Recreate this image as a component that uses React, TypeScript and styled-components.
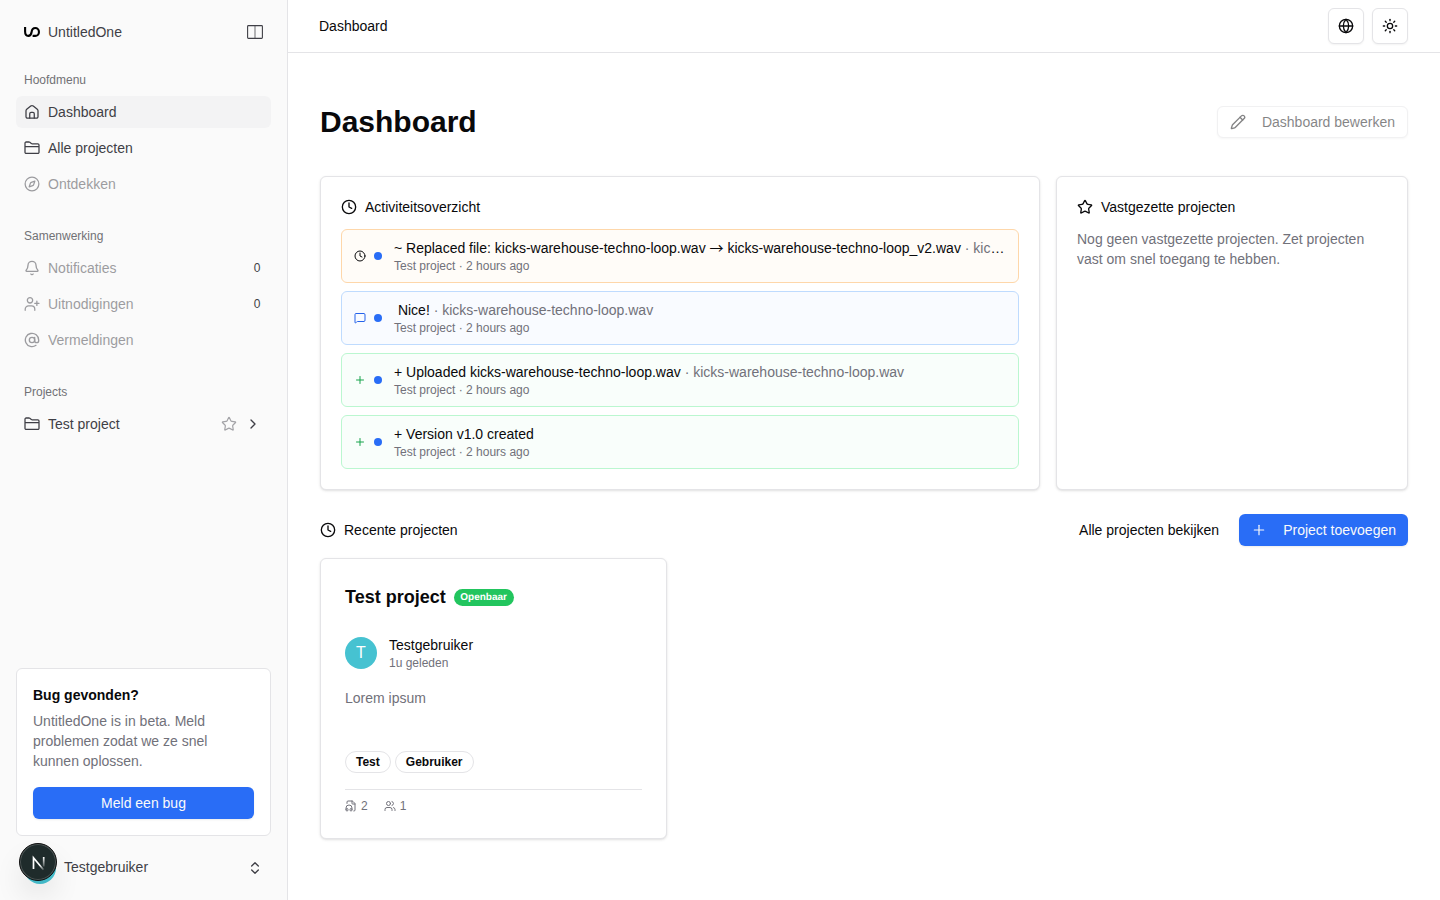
import React from 'react';
import styled, { createGlobalStyle, css } from 'styled-components';
import {
  AtSign,
  Bell,
  ChevronRight,
  ChevronsUpDown,
  Clock,
  FileHeadphone,
  Globe,
  MessageSquare,
  Pencil,
  Plus,
  Star,
  Sun,
  Users,
} from 'lucide-react';

const GlobalStyle = createGlobalStyle`
  *, *::before, *::after { box-sizing: border-box; }
  body {
    margin: 0;
    background: #fff;
    color: #09090b;
    font: 400 14px/20px "Liberation Sans", Arial, sans-serif;
  }
  h1, h2, h3, p { margin: 0; font-size: inherit; font-weight: inherit; }
  button { font: inherit; color: inherit; margin: 0; }
  svg { display: block; flex: none; }
`;

const Shell = styled.div`
  display: flex;
  height: 900px;
  overflow: hidden;
`;

const Sidebar = styled.aside`
  display: flex;
  flex-direction: column;
  flex: none;
  width: 288px;
  padding: 16px;
  background: #fafafa;
  border-right: 1px solid #e4e4e7;
  color: #3f3f46;
`;

const Brand = styled.div`
  display: flex;
  align-items: center;
  gap: 8px;
  height: 32px;
  padding: 0 8px;
  margin-bottom: 16px;

  span { flex: 1; }
`;

const NavGroup = styled.nav`
  display: flex;
  flex-direction: column;
  gap: 4px;
  margin-bottom: 20px;
`;

const NavLabel = styled.div`
  height: 28px;
  padding: 0 8px;
  font-size: 12px;
  line-height: 32px;
  color: #717175;
`;

const NavItem = styled.a<{ $active?: boolean; $muted?: boolean }>`
  display: flex;
  align-items: center;
  gap: 8px;
  height: 32px;
  padding: 0 10px 0 8px;
  border-radius: 6px;
  background: ${(p) => (p.$active ? '#f3f3f4' : 'transparent')};

  > svg, > span { opacity: ${(p) => (p.$muted ? 0.5 : 1)}; }
  > span { flex: 1; }
`;

const Count = styled.b`
  margin-right: 0.6px;
  font-size: 12px;
  font-weight: 400;
`;

const ItemActions = styled.div`
  display: flex;
  align-items: center;
  gap: 8px;

  svg:first-child { color: #a3a3a7; }
`;

const BugCard = styled.section`
  margin-top: auto;
  padding: 16px;
  background: #fff;
  border: 1px solid #e4e4e7;
  border-radius: 6px;
  color: #71717a;

  h2 {
    margin-bottom: 6px;
    font-weight: 700;
    color: #09090b;
  }
`;

const Button = styled.button<{ $variant: 'primary' | 'outline' | 'ghost'; $wide?: boolean }>`
  display: inline-flex;
  align-items: center;
  justify-content: center;
  gap: 16px;
  height: 32px;
  padding: 0 12px;
  border: 0;
  border-radius: 6px;
  background: transparent;
  white-space: nowrap;
  ${(p) => p.$wide && css`width: 100%; margin-top: 16px;`}
  ${(p) =>
    p.$variant === 'primary' &&
    css`
      background: #296df6;
      color: #fafafa;
      box-shadow: 0 1px 2px rgba(0, 0, 0, 0.08);
    `}
  ${(p) =>
    p.$variant === 'outline' &&
    css`
      background: #fff;
      border: 1px solid #e4e4e7;
      box-shadow: 0 1px 2px rgba(0, 0, 0, 0.06);
      opacity: 0.5;
    `}
`;

const UserRow = styled.div`
  display: flex;
  align-items: center;
  gap: 8px;
  height: 32px;
  margin-top: 16px;
  padding: 0 8px;
  position: relative;

  > span { flex: 1; padding-bottom: 2px; }
`;

const Avatar = styled.div`
  flex: none;
  width: 32px;
  height: 32px;
  border-radius: 50%;
  background: #46c2d1;
  color: #fff;
  font-size: 16px;
  line-height: 31px;
  text-align: center;
`;

const DevBadge = styled.div`
  position: absolute;
  left: 3px;
  top: -9px;
  display: grid;
  place-items: center;
  width: 38px;
  height: 38px;
  border-radius: 50%;
  background: #1f2b2b;
  border: 1px solid #111;
  box-shadow: inset 0 0 0 1px rgba(255, 255, 255, 0.2), 0 16px 32px -8px rgba(0, 0, 0, 0.24);
`;

const Main = styled.main`
  flex: 1;
  min-width: 0;
`;

const TopBar = styled.header`
  display: flex;
  align-items: center;
  justify-content: space-between;
  height: 53px;
  padding: 0 32px 0 31px;
  border-bottom: 1px solid #e4e4e7;
`;

const TopActions = styled.div`
  display: flex;
  gap: 8px;
`;

const IconButton = styled.button`
  display: grid;
  place-items: center;
  width: 36px;
  height: 36px;
  padding: 0;
  background: #fff;
  border: 1px solid #e4e4e7;
  border-radius: 6px;
  box-shadow: 0 1px 2px rgba(0, 0, 0, 0.05);
`;

const Content = styled.div`
  padding: 51px 32px 0;
`;

const TitleRow = styled.div`
  display: flex;
  align-items: center;
  justify-content: space-between;
  height: 36px;
  margin-bottom: 36px;

  h1 {
    font-size: 30px;
    line-height: 36px;
    font-weight: 700;
  }
`;

const Widgets = styled.div`
  display: grid;
  grid-template-columns: 720px 352px;
  gap: 16px;
`;

const Card = styled.section<{ $pad: number }>`
  min-width: 0;
  padding: ${(p) => p.$pad}px;
  background: #fff;
  border: 1px solid #e4e4e7;
  border-radius: 6px;
  box-shadow: 0 1px 3px rgba(0, 0, 0, 0.1), 0 1px 2px -1px rgba(0, 0, 0, 0.1);
`;

const SectionTitle = styled.h2`
  display: flex;
  align-items: center;
  gap: 8px;
  height: 20px;
`;

const Empty = styled.p`
  margin-top: 12px;
  color: #71717a;
`;

const Feed = styled.div`
  display: flex;
  flex-direction: column;
  gap: 8px;
  margin-top: 12px;
`;

const tones = {
  orange: { line: '#fed7aa', fill: '#fffcf8', icon: '#09090b' },
  blue: { line: '#bfdbfe', fill: '#f9fbff', icon: '#2563eb' },
  green: { line: '#bbf7d0', fill: '#f9fefb', icon: '#16a34a' },
};

const FeedItem = styled.article<{ $tone: keyof typeof tones }>`
  display: flex;
  align-items: center;
  height: 54px;
  padding: 0 12px;
  border: 1px solid ${(p) => tones[p.$tone].line};
  border-radius: 6px;
  background: ${(p) => tones[p.$tone].fill};

  > svg { color: ${(p) => tones[p.$tone].icon}; }
`;

const Dot = styled.i`
  flex: none;
  width: 8px;
  height: 8px;
  margin: 0 12px 0 8px;
  border-radius: 50%;
  background: #296df6;
`;

const FeedText = styled.div`
  flex: 1;
  min-width: 0;

  p {
    height: 20px;
    overflow: hidden;
    text-overflow: ellipsis;
    white-space: nowrap;
  }
  span { color: #71717a; }
  small {
    display: block;
    font-size: 12px;
    line-height: 16px;
    color: #71717a;
  }
`;

const Arrow = styled.em`
  font-family: "Noto Sans CJK JP", sans-serif;
  font-style: normal;
  line-height: 1;
`;

const RecentBar = styled.div`
  display: flex;
  align-items: center;
  justify-content: space-between;
  height: 32px;
  margin: 24px 0 12px;
`;

const ProjectGrid = styled.div`
  display: grid;
  grid-template-columns: repeat(3, 1fr);
  gap: 24px;
`;

const ProjectHead = styled.div`
  display: flex;
  align-items: center;
  gap: 8px;
  height: 28px;

  h3 {
    font-size: 18px;
    line-height: 28px;
    font-weight: 700;
  }
`;

const PublicBadge = styled.span`
  height: 17px;
  margin-top: 1px;
  padding: 0 6.600px;
  border-radius: 9px;
  background: #22c55e;
  color: #fff;
  font-size: 10px;
  font-weight: 700;
  line-height: 17px;
  text-rendering: geometricPrecision;
`;

const Owner = styled.div`
  display: flex;
  align-items: center;
  gap: 12px;
  height: 36px;
  margin-top: 24px;

  small {
    display: block;
    font-size: 12px;
    line-height: 16px;
    color: #71717a;
  }
`;

const Description = styled.p`
  height: 40px;
  margin-top: 17px;
  color: #71717a;
`;

const Tags = styled.div`
  display: flex;
  gap: 4px;
  margin-top: 23px;
`;

const Tag = styled.span`
  height: 22px;
  padding: 0 10px;
  border: 1px solid #e4e4e7;
  border-radius: 11px;
  font-size: 12px;
  font-weight: 700;
  line-height: 20px;
`;

const Stats = styled.footer`
  display: flex;
  gap: 16px;
  height: 25px;
  margin-top: 16px;
  padding-top: 8px;
  border-top: 1px solid #e4e4e7;
  color: #71717a;
  font-size: 12px;
  line-height: 16px;

  span {
    display: flex;
    align-items: center;
    gap: 4px;
  }
`;

const Glyph = ({ children }: { children: React.ReactNode }) => (
  <svg
    width="16"
    height="16"
    viewBox="0 0 24 24"
    fill="none"
    stroke="currentColor"
    strokeWidth="1.9"
    strokeLinecap="round"
    strokeLinejoin="round"
  >
    {children}
  </svg>
);

const Logo = () => (
  <svg width="16" height="16" viewBox="0 0 16 16" fill="none" stroke="#000" strokeWidth="2.1">
    <path d="M1.100 3v4.500c0 2.700 1.200 4.400 3.200 4.400 2.300 0 3-1.700 3.300-3.900C7.900 5.400 9 4 11.300 4a3.650 3.950 0 0 1 0 7.900H8.600" />
  </svg>
);

const PanelIcon = () => (
  <svg width="16" height="14" viewBox="0 0 16 14" fill="none" stroke="#3f3f46" strokeWidth="1.1">
    <path d="M8 1v12" strokeOpacity="0.7" />
    <rect x="0.600" y="0.600" width="14.800" height="12.800" rx="0.800" />
  </svg>
);

const HomeIcon = () => (
  <Glyph>
    <path d="M3 10.200a3 3 0 0 1 1.100-2.300l6-4.800a3 3 0 0 1 3.800 0l6 4.800A3 3 0 0 1 21 10.200V19a2.300 2.300 0 0 1-2.300 2.300H5.300A2.300 2.300 0 0 1 3 19z" />
    <path d="M8.600 21v-6.300a2 2 0 0 1 2-2h2.800a2 2 0 0 1 2 2V21" />
  </Glyph>
);

const FolderIcon = () => (
  <Glyph>
    <path d="M1.500 9.800V4.700A1.700 1.700 0 0 1 3.200 3h4.200c.5 0 .9.200 1.300.5l2.300 1.800c.4.300.8.500 1.300.5h8.500a1.700 1.700 0 0 1 1.700 1.700v11a1.700 1.700 0 0 1-1.700 1.700H3.200a1.700 1.700 0 0 1-1.700-1.700V9.800h21" />
  </Glyph>
);

const CompassIcon = () => (
  <Glyph>
    <circle cx="12" cy="12" r="10.300" />
    <path d="M16.200 7.800l-5.200 1.700a2.300 2.300 0 0 0-1.500 1.500l-1.700 5.200 5.200-1.700a2.300 2.300 0 0 0 1.500-1.500z" />
  </Glyph>
);

const InviteIcon = () => (
  <Glyph>
    <circle cx="9" cy="6.500" r="4" />
    <path d="M1.800 21.500v-1.700a5 5 0 0 1 5-5h4.400a5 5 0 0 1 5 5v1.700M19.300 7.800v6.400M16.100 11h6.400" />
  </Glyph>
);

const NextMark = () => (
  <svg width="38" height="38" viewBox="0 0 38 38" fill="none">
    <defs>
      <linearGradient id="diag" x1="13" y1="13" x2="24" y2="27" gradientUnits="userSpaceOnUse">
        <stop offset="0.6" stopColor="#fff" />
        <stop offset="1" stopColor="#fff" stopOpacity="0" />
      </linearGradient>
      <linearGradient id="stem" x1="24" y1="13" x2="24" y2="25" gradientUnits="userSpaceOnUse">
        <stop stopColor="#fff" />
        <stop offset="1" stopColor="#fff" stopOpacity="0" />
      </linearGradient>
    </defs>
    <path d="M13.500 25V13.800l10 12" stroke="url(#diag)" strokeWidth="1.700" />
    <path d="M23.700 13v9.500" stroke="url(#stem)" strokeWidth="1.700" />
  </svg>
);

const activities = [
  {
    id: 'replaced',
    tone: 'orange' as const,
    icon: <Clock size={12} />,
    text: (
      <>
        ~ Replaced file: kicks-warehouse-techno-loop.wav <Arrow>→</Arrow> kicks-warehouse-techno-loop_v2.wav
      </>
    ),
    file: 'kicks-warehouse-techno-loop.wav',
  },
  {
    id: 'comment',
    tone: 'blue' as const,
    icon: <MessageSquare size={12} />,
    text: '\u00a0Nice!',
    file: 'kicks-warehouse-techno-loop.wav',
  },
  {
    id: 'uploaded',
    tone: 'green' as const,
    icon: <Plus size={12} />,
    text: '+ Uploaded kicks-warehouse-techno-loop.wav',
    file: 'kicks-warehouse-techno-loop.wav',
  },
  { id: 'version', tone: 'green' as const, icon: <Plus size={12} />, text: '+ Version v1.0 created' },
];

export default function App() {
  return (
    <Shell>
      <GlobalStyle />
      <Sidebar>
        <Brand>
          <Logo />
          <span>UntitledOne</span>
          <PanelIcon />
        </Brand>
        <NavGroup>
          <NavLabel>Hoofdmenu</NavLabel>
          <NavItem $active>
            <HomeIcon />
            <span>Dashboard</span>
          </NavItem>
          <NavItem>
            <FolderIcon />
            <span>Alle projecten</span>
          </NavItem>
          <NavItem $muted>
            <CompassIcon />
            <span>Ontdekken</span>
          </NavItem>
        </NavGroup>
        <NavGroup>
          <NavLabel>Samenwerking</NavLabel>
          <NavItem $muted>
            <Bell size={16} />
            <span>Notificaties</span>
            <Count>0</Count>
          </NavItem>
          <NavItem $muted>
            <InviteIcon />
            <span>Uitnodigingen</span>
            <Count>0</Count>
          </NavItem>
          <NavItem $muted>
            <AtSign size={16} />
            <span>Vermeldingen</span>
          </NavItem>
        </NavGroup>
        <NavGroup>
          <NavLabel>Projects</NavLabel>
          <NavItem>
            <FolderIcon />
            <span>Test project</span>
            <ItemActions>
              <Star size={16} strokeWidth={1.8} />
              <ChevronRight size={16} />
            </ItemActions>
          </NavItem>
        </NavGroup>
        <BugCard>
          <h2>Bug gevonden?</h2>
          <p>UntitledOne is in beta. Meld problemen zodat we ze snel kunnen oplossen.</p>
          <Button $variant="primary" $wide>
            Meld een bug
          </Button>
        </BugCard>
        <UserRow>
          <Avatar />
          <span>Testgebruiker</span>
          <ChevronsUpDown size={16} />
          <DevBadge>
            <NextMark />
          </DevBadge>
        </UserRow>
      </Sidebar>
      <Main>
        <TopBar>
          <span>Dashboard</span>
          <TopActions>
            <IconButton aria-label="Taal">
              <Globe size={16} />
            </IconButton>
            <IconButton aria-label="Thema">
              <Sun size={16} />
            </IconButton>
          </TopActions>
        </TopBar>
        <Content>
          <TitleRow>
            <h1>Dashboard</h1>
            <Button $variant="outline" disabled>
              <Pencil size={16} />
              Dashboard bewerken
            </Button>
          </TitleRow>
          <Widgets>
            <Card $pad={20}>
              <SectionTitle>
                <Clock size={16} />
                Activiteitsoverzicht
              </SectionTitle>
              <Feed>
                {activities.map((a) => (
                  <FeedItem key={a.id} $tone={a.tone}>
                    {a.icon}
                    <Dot />
                    <FeedText>
                      <p>
                        {a.text}
                        {a.file && <span> · {a.file}</span>}
                      </p>
                      <small>Test project · 2 hours ago</small>
                    </FeedText>
                  </FeedItem>
                ))}
              </Feed>
            </Card>
            <Card $pad={20}>
              <SectionTitle>
                <Star size={16} />
                Vastgezette projecten
              </SectionTitle>
              <Empty>Nog geen vastgezette projecten. Zet projecten vast om snel toegang te hebben.</Empty>
            </Card>
          </Widgets>
          <RecentBar>
            <SectionTitle>
              <Clock size={16} />
              Recente projecten
            </SectionTitle>
            <TopActions>
              <Button $variant="ghost">Alle projecten bekijken</Button>
              <Button $variant="primary">
                <Plus size={16} strokeWidth={1.8} />
                Project toevoegen
              </Button>
            </TopActions>
          </RecentBar>
          <ProjectGrid>
            <Card $pad={24}>
              <ProjectHead>
                <h3>Test project</h3>
                <PublicBadge>Openbaar</PublicBadge>
              </ProjectHead>
              <Owner>
                <Avatar>T</Avatar>
                <div>
                  Testgebruiker
                  <small>1u geleden</small>
                </div>
              </Owner>
              <Description>Lorem ipsum</Description>
              <Tags>
                <Tag>Test</Tag>
                <Tag>Gebruiker</Tag>
              </Tags>
              <Stats>
                <span>
                  <FileHeadphone size={12} />2
                </span>
                <span>
                  <Users size={12} />1
                </span>
              </Stats>
            </Card>
          </ProjectGrid>
        </Content>
      </Main>
    </Shell>
  );
}
